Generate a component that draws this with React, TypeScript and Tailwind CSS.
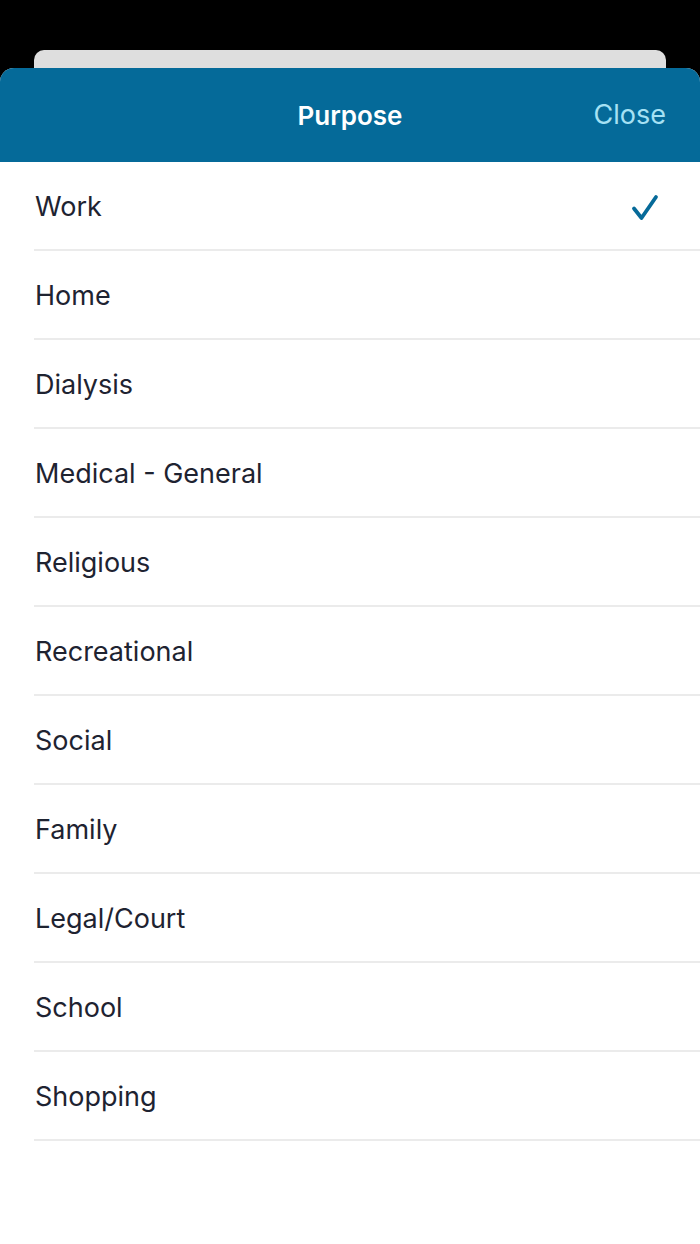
import { useState } from "react";

const purposes = [
  "Work",
  "Home",
  "Dialysis",
  "Medical - General",
  "Religious",
  "Recreational",
  "Social",
  "Family",
  "Legal/Court",
  "School",
  "Shopping",
];

const App = () => {
  const [selected, setSelected] = useState("Work");

  return (
    <div className="h-[1244px] w-[700px] overflow-hidden bg-black font-['Inter',sans-serif]">
      <div className="h-[50px]" />
      <div className="mx-[34px] h-[18px] rounded-t-[10px] bg-[#dedede]" />
      <div className="flex h-[1176px] flex-col overflow-hidden rounded-t-[14px] bg-white">
        <div className="relative flex h-[94px] items-center justify-center bg-[#056a99]">
          <h1 className="text-[26px] font-semibold text-white">Purpose</h1>
          <button
            type="button"
            className="absolute right-[34px] text-[27px] text-[#a6e1f4]"
          >
            Close
          </button>
        </div>
        <ul className="pl-[34px]">
          {purposes.map((item) => (
            <li
              key={item}
              onClick={() => setSelected(item)}
              className="flex h-[89px] items-center justify-between border-b-2 border-[#ebebeb] pr-[40px] pt-1 text-[27px] text-[#1e2331]"
            >
              <span className="pl-px">{item}</span>
              {selected === item && (
                <svg width="30" height="30" viewBox="0 0 30 30" fill="none">
                  <path
                    d="M4 15.5 L11.5 25 L26 4"
                    stroke="#066a99"
                    strokeWidth="3.8"
                    strokeLinecap="round"
                    strokeLinejoin="round"
                  />
                </svg>
              )}
            </li>
          ))}
        </ul>
      </div>
    </div>
  );
};

export default App;
